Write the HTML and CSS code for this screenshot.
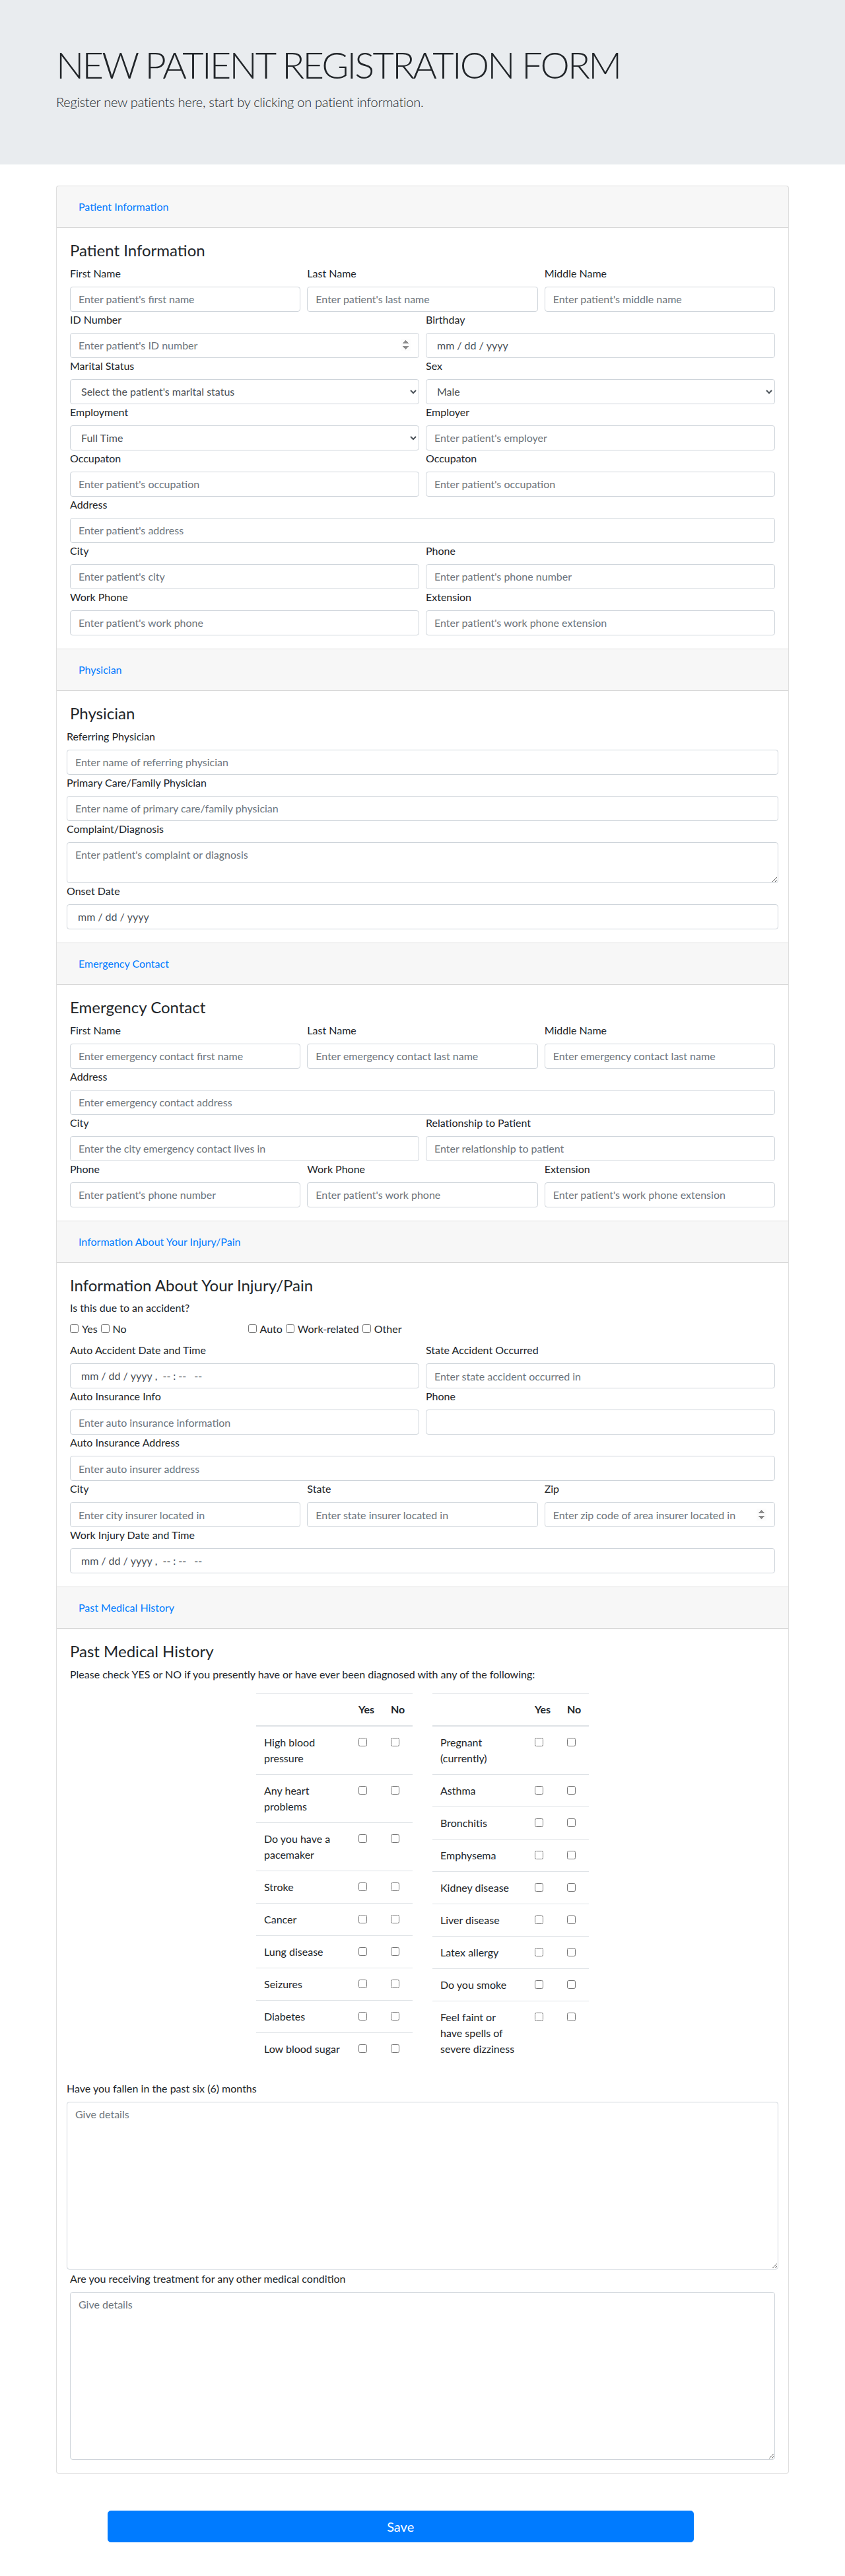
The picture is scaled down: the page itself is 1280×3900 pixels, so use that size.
FILE: index.html
```html
<!DOCTYPE html>
<html lang="en">
<head>
<meta charset="utf-8">
<title>New Patient Registration Form</title>
<link rel="stylesheet" href="styles.css">
</head>
<body>
<div class="jumbotron">
  <div class="container">
    <h1 class="display">NEW PATIENT REGISTRATION FORM</h1>
    <p class="lead">Register new patients here, start by clicking on patient information.</p>
  </div>
</div>

<div class="container">
  <form>
    <div class="accordion">

      <!-- Patient Information -->
      <div class="card card-first">
        <div class="card-header"><h2 class="acc-head"><button class="btn-link" type="button">Patient Information</button></h2></div>
        <div class="card-body">
          <h4 class="section-title">Patient Information</h4>
          <div class="form-row">
            <div class="col"><label>First Name</label><input class="form-control" type="text" placeholder="Enter patient's first name"></div>
            <div class="col"><label>Last Name</label><input class="form-control" type="text" placeholder="Enter patient's last name"></div>
            <div class="col"><label>Middle Name</label><input class="form-control" type="text" placeholder="Enter patient's middle name"></div>
          </div>
          <div class="form-row">
            <div class="col"><label>ID Number</label><input class="form-control" type="number" placeholder="Enter patient's ID number"></div>
            <div class="col"><label>Birthday</label><input class="form-control" type="date"></div>
          </div>
          <div class="form-row">
            <div class="col"><label>Marital Status</label>
              <select class="form-control"><option>Select the patient's marital status</option><option>Single</option><option>Married</option></select>
            </div>
            <div class="col"><label>Sex</label>
              <select class="form-control"><option>Male</option><option>Female</option></select>
            </div>
          </div>
          <div class="form-row">
            <div class="col"><label>Employment</label>
              <select class="form-control"><option>Full Time</option><option>Part Time</option><option>Unemployed</option></select>
            </div>
            <div class="col"><label>Employer</label><input class="form-control" type="text" placeholder="Enter patient's employer"></div>
          </div>
          <div class="form-row">
            <div class="col"><label>Occupaton</label><input class="form-control" type="text" placeholder="Enter patient's occupation"></div>
            <div class="col"><label>Occupaton</label><input class="form-control" type="text" placeholder="Enter patient's occupation"></div>
          </div>
          <div class="form-row">
            <div class="col"><label>Address</label><input class="form-control" type="text" placeholder="Enter patient's address"></div>
          </div>
          <div class="form-row">
            <div class="col"><label>City</label><input class="form-control" type="text" placeholder="Enter patient's city"></div>
            <div class="col"><label>Phone</label><input class="form-control" type="text" placeholder="Enter patient's phone number"></div>
          </div>
          <div class="form-row">
            <div class="col"><label>Work Phone</label><input class="form-control" type="text" placeholder="Enter patient's work phone"></div>
            <div class="col"><label>Extension</label><input class="form-control" type="text" placeholder="Enter patient's work phone extension"></div>
          </div>
        </div>
      </div>

      <!-- Physician -->
      <div class="card">
        <div class="card-header"><h2 class="acc-head"><button class="btn-link" type="button">Physician</button></h2></div>
        <div class="card-body">
          <h4 class="section-title">Physician</h4>
          <div class="wide">
            <label>Referring Physician</label><input class="form-control" type="text" placeholder="Enter name of referring physician">
          </div>
          <div class="wide">
            <label>Primary Care/Family Physician</label><input class="form-control" type="text" placeholder="Enter name of primary care/family physician">
          </div>
          <div class="wide">
            <label>Complaint/Diagnosis</label><textarea class="form-control ta-sm" placeholder="Enter patient's complaint or diagnosis"></textarea>
          </div>
          <div class="wide">
            <label>Onset Date</label><input class="form-control" type="date">
          </div>
        </div>
      </div>

      <!-- Emergency Contact -->
      <div class="card">
        <div class="card-header"><h2 class="acc-head"><button class="btn-link" type="button">Emergency Contact</button></h2></div>
        <div class="card-body">
          <h4 class="section-title">Emergency Contact</h4>
          <div class="form-row">
            <div class="col"><label>First Name</label><input class="form-control" type="text" placeholder="Enter emergency contact first name"></div>
            <div class="col"><label>Last Name</label><input class="form-control" type="text" placeholder="Enter emergency contact last name"></div>
            <div class="col"><label>Middle Name</label><input class="form-control" type="text" placeholder="Enter emergency contact last name"></div>
          </div>
          <div class="form-row">
            <div class="col"><label>Address</label><input class="form-control" type="text" placeholder="Enter emergency contact address"></div>
          </div>
          <div class="form-row">
            <div class="col"><label>City</label><input class="form-control" type="text" placeholder="Enter the city emergency contact lives in"></div>
            <div class="col"><label>Relationship to Patient</label><input class="form-control" type="text" placeholder="Enter relationship to patient"></div>
          </div>
          <div class="form-row">
            <div class="col"><label>Phone</label><input class="form-control" type="text" placeholder="Enter patient's phone number"></div>
            <div class="col"><label>Work Phone</label><input class="form-control" type="text" placeholder="Enter patient's work phone"></div>
            <div class="col"><label>Extension</label><input class="form-control" type="text" placeholder="Enter patient's work phone extension"></div>
          </div>
        </div>
      </div>

      <!-- Injury -->
      <div class="card">
        <div class="card-header"><h2 class="acc-head"><button class="btn-link" type="button">Information About Your Injury/Pain</button></h2></div>
        <div class="card-body">
          <h4 class="section-title">Information About Your Injury/Pain</h4>
          <div class="form-row">
            <div class="col"><label>Is this due to an accident?</label></div>
          </div>
          <div class="form-row">
            <div class="col-3">
              <label class="cb"><input type="checkbox">Yes</label><label class="cb"><input type="checkbox">No</label>
            </div>
            <div class="col">
              <label class="cb"><input type="checkbox">Auto</label><label class="cb"><input type="checkbox">Work-related</label><label class="cb"><input type="checkbox">Other</label>
            </div>
          </div>
          <div class="form-row">
            <div class="col"><label>Auto Accident Date and Time</label><input class="form-control" type="datetime-local"></div>
            <div class="col"><label>State Accident Occurred</label><input class="form-control" type="text" placeholder="Enter state accident occurred in"></div>
          </div>
          <div class="form-row">
            <div class="col"><label>Auto Insurance Info</label><input class="form-control" type="text" placeholder="Enter auto insurance information"></div>
            <div class="col"><label>Phone</label><input class="form-control" type="text"></div>
          </div>
          <div class="form-row">
            <div class="col"><label>Auto Insurance Address</label><input class="form-control" type="text" placeholder="Enter auto insurer address"></div>
          </div>
          <div class="form-row">
            <div class="col"><label>City</label><input class="form-control" type="text" placeholder="Enter city insurer located in"></div>
            <div class="col"><label>State</label><input class="form-control" type="text" placeholder="Enter state insurer located in"></div>
            <div class="col"><label>Zip</label><input class="form-control" type="number" placeholder="Enter zip code of area insurer located in"></div>
          </div>
          <div class="form-row">
            <div class="col"><label>Work Injury Date and Time</label><input class="form-control" type="datetime-local"></div>
          </div>
        </div>
      </div>

      <!-- Past Medical History -->
      <div class="card card-last">
        <div class="card-header"><h2 class="acc-head"><button class="btn-link" type="button">Past Medical History</button></h2></div>
        <div class="card-body">
          <h4 class="section-title">Past Medical History</h4>
          <p class="intro">Please check YES or NO if you presently have or have ever been diagnosed with any of the following:</p>
          <div class="pmh-tables">
            <table class="pmh">
              <colgroup><col class="c-cond"><col class="c-yes"><col class="c-no"></colgroup>
              <thead><tr><th></th><th>Yes</th><th>No</th></tr></thead>
              <tbody>
                <tr><td>High blood pressure</td><td><input type="checkbox"></td><td><input type="checkbox"></td></tr>
                <tr><td>Any heart problems</td><td><input type="checkbox"></td><td><input type="checkbox"></td></tr>
                <tr><td>Do you have a pacemaker</td><td><input type="checkbox"></td><td><input type="checkbox"></td></tr>
                <tr><td>Stroke</td><td><input type="checkbox"></td><td><input type="checkbox"></td></tr>
                <tr><td>Cancer</td><td><input type="checkbox"></td><td><input type="checkbox"></td></tr>
                <tr><td>Lung disease</td><td><input type="checkbox"></td><td><input type="checkbox"></td></tr>
                <tr><td>Seizures</td><td><input type="checkbox"></td><td><input type="checkbox"></td></tr>
                <tr><td>Diabetes</td><td><input type="checkbox"></td><td><input type="checkbox"></td></tr>
                <tr><td>Low blood sugar</td><td><input type="checkbox"></td><td><input type="checkbox"></td></tr>
              </tbody>
            </table>
            <table class="pmh">
              <colgroup><col class="c-cond"><col class="c-yes"><col class="c-no"></colgroup>
              <thead><tr><th></th><th>Yes</th><th>No</th></tr></thead>
              <tbody>
                <tr><td>Pregnant (currently)</td><td><input type="checkbox"></td><td><input type="checkbox"></td></tr>
                <tr><td>Asthma</td><td><input type="checkbox"></td><td><input type="checkbox"></td></tr>
                <tr><td>Bronchitis</td><td><input type="checkbox"></td><td><input type="checkbox"></td></tr>
                <tr><td>Emphysema</td><td><input type="checkbox"></td><td><input type="checkbox"></td></tr>
                <tr><td>Kidney disease</td><td><input type="checkbox"></td><td><input type="checkbox"></td></tr>
                <tr><td>Liver disease</td><td><input type="checkbox"></td><td><input type="checkbox"></td></tr>
                <tr><td>Latex allergy</td><td><input type="checkbox"></td><td><input type="checkbox"></td></tr>
                <tr><td>Do you smoke</td><td><input type="checkbox"></td><td><input type="checkbox"></td></tr>
                <tr><td>Feel faint or have spells of severe dizziness</td><td><input type="checkbox"></td><td><input type="checkbox"></td></tr>
              </tbody>
            </table>
          </div>
          <div class="wide">
            <label>Have you fallen in the past six (6) months</label>
            <textarea class="form-control ta-lg" placeholder="Give details"></textarea>
          </div>
          <div class="form-row after-ta">
            <div class="col">
              <label>Are you receiving treatment for any other medical condition</label>
              <textarea class="form-control ta-lg" placeholder="Give details"></textarea>
            </div>
          </div>
        </div>
      </div>

    </div>
    <button class="btn-save" type="button">Save</button>
  </form>
</div>
</body>
</html>
```

FILE: styles.css
```css
* { box-sizing: border-box; }

body {
  margin: 0;
  font-family: Lato, "Open Sans", "Liberation Sans", sans-serif;
  font-size: 16px;
  line-height: 1.5;
  color: #212529;
  background: #fff;
}

.container {
  width: 1140px;
  margin: 0 auto;
  padding: 0 15px;
}

/* Jumbotron */
.jumbotron {
  background: #e9ecef;
  padding: 64px 0;
  margin-bottom: 32px;
}
.display {
  margin: 0 0 8px;
  font-size: 56px;
  font-weight: 300;
  line-height: 1.2;
  letter-spacing: -2.8px;
}
.lead {
  margin: 0 0 16px;
  font-size: 20px;
  font-weight: 300;
  letter-spacing: -0.25px;
}

/* Accordion cards */
.card {
  background: #fff;
  border: 1px solid rgba(0, 0, 0, .125);
  border-bottom: 0;
}
.card-first { border-radius: 4px 4px 0 0; }
.card-last { border-bottom: 1px solid rgba(0, 0, 0, .125); border-radius: 0 0 4px 4px; }

.card-header {
  padding: 12px 20px;
  background: rgba(0, 0, 0, .03);
  border-bottom: 1px solid rgba(0, 0, 0, .125);
}
.acc-head {
  display: flex;
  margin: 0;
  font-size: 16px;
}
.btn-link {
  padding: 6px 12px;
  font-family: inherit;
  font-size: 16px;
  line-height: 24px;
  font-weight: 400;
  color: #007bff;
  background: transparent;
  border: 1px solid transparent;
  border-radius: 4px;
  cursor: pointer;
}

.card-body { padding: 20px; }

.section-title {
  margin: 0 0 8px;
  font-size: 24px;
  font-weight: 400;
  line-height: 1.2;
}

/* Forms */
label {
  display: inline-block;
  margin-bottom: 8px;
}
.form-row {
  display: flex;
  margin: 0 -5px;
}
.form-row > .col {
  flex: 1 1 0;
  min-width: 0;
  padding: 0 5px;
}
.form-row > .col-3 {
  flex: 0 0 25%;
  padding: 0 5px;
}
.wide { margin: 0 -5px; }

.form-control {
  display: block;
  width: 100%;
  height: 38px;
  padding: 6px 12px;
  font-family: inherit;
  font-size: 16px;
  line-height: 1.5;
  color: #495057;
  background: #fff;
  border: 1px solid #ced4da;
  border-radius: 4px;
  margin: 0;
}
.form-control::placeholder { color: #6c757d; opacity: 1; }
textarea.form-control { resize: vertical; }
.ta-sm { height: 62px; }
.ta-lg { height: 254px; }

input[type="number"]::-webkit-inner-spin-button { opacity: 1; }
input[type="date"]::-webkit-calendar-picker-indicator,
input[type="datetime-local"]::-webkit-calendar-picker-indicator { display: none; }
input[type="date"]::-webkit-datetime-edit,
input[type="datetime-local"]::-webkit-datetime-edit { padding-left: 3px; }
input[type="date"]::-webkit-datetime-edit-text,
input[type="datetime-local"]::-webkit-datetime-edit-text { padding: 0 3px; }

.cb { margin: 0 5px 8px 0; }
.cb input, .pmh input {
  margin: 0 5px 0 0;
  vertical-align: baseline;
  width: 13px;
  height: 13px;
}
.pmh input { margin: 0; }

/* Past medical history */
.intro { margin: 0 0 16px; }
.pmh-tables {
  display: flex;
  justify-content: center;
  align-items: flex-start;
  gap: 30px;
  margin-bottom: 24px;
}
.pmh {
  width: 237px;
  table-layout: fixed;
  border-collapse: collapse;
}
.c-cond { width: 143px; }
.c-yes { width: 49px; }
.c-no { width: 45px; }
.pmh th, .pmh td {
  padding: 12px;
  text-align: left;
  vertical-align: top;
  border-top: 1px solid #dee2e6;
}
.pmh thead th {
  vertical-align: bottom;
  border-bottom: 2px solid #dee2e6;
  font-weight: 700;
}
.after-ta { margin-top: 2px; }

.btn-save {
  display: block;
  width: 80%;
  height: 48px;
  margin: 56px 0 0 7%;
  padding: 8px 16px;
  font-family: inherit;
  font-size: 20px;
  line-height: 1.5;
  color: #fff;
  background: #007bff;
  border: 1px solid #007bff;
  border-radius: 4.8px;
  cursor: pointer;
}
```
